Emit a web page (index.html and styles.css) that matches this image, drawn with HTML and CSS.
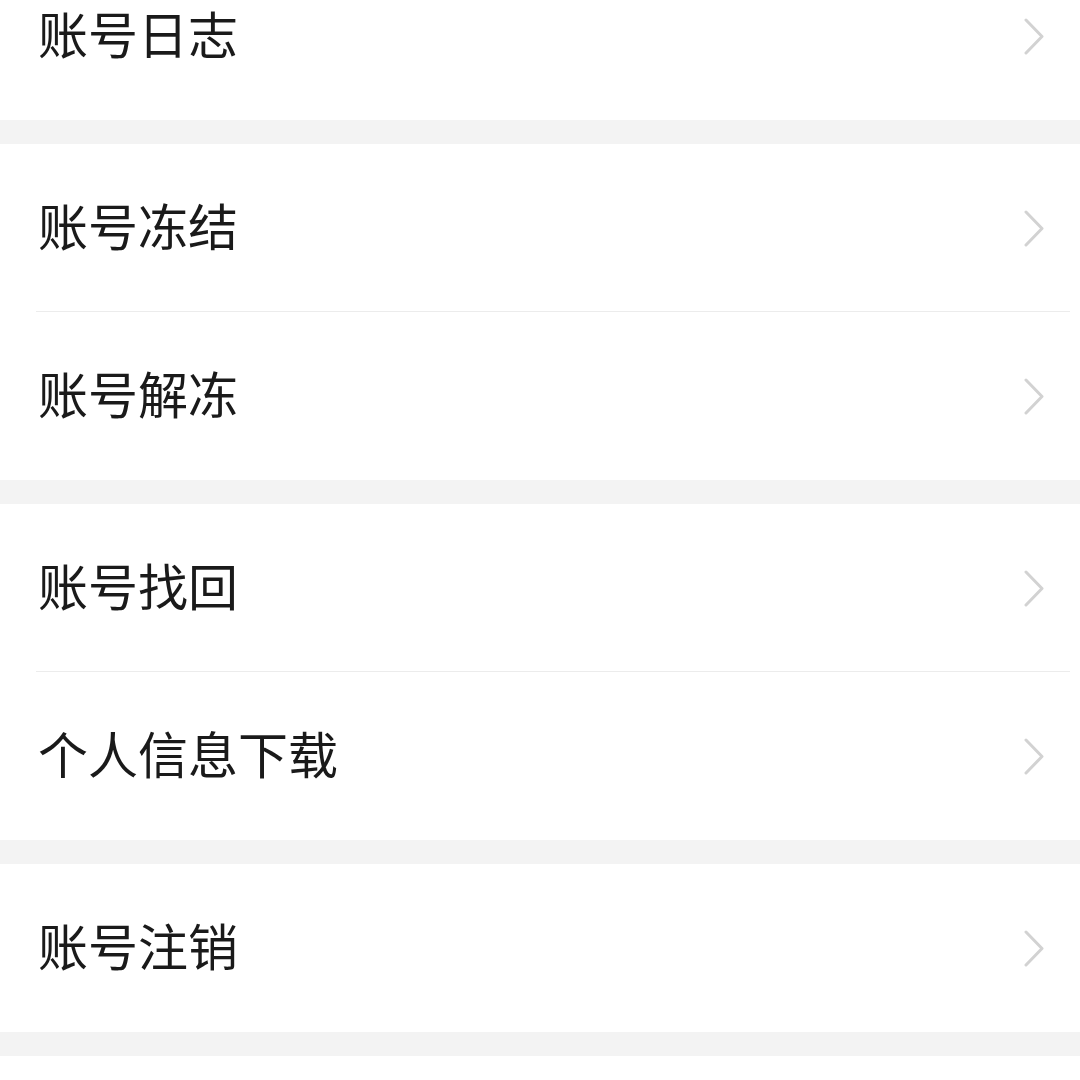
FILE: index.html
```html
<!DOCTYPE html>
<html lang="zh-CN">
<head>
    <meta charset="UTF-8">
    <meta name="viewport" content="width=device-width, initial-scale=1.0">
    <title>账号与安全</title>
    <link rel="stylesheet" href="styles.css">
</head>
<body>
<div class="settings">
    <div class="group group-first">
        <div class="item">
            <span class="label">账号日志</span>
            <svg class="arrow" viewBox="0 0 22 37"><polyline points="3,2 19,18.5 3,35"/></svg>
        </div>
    </div>
    <div class="group">
        <div class="item">
            <span class="label">账号冻结</span>
            <svg class="arrow" viewBox="0 0 22 37"><polyline points="3,2 19,18.5 3,35"/></svg>
        </div>
        <div class="item">
            <span class="label">账号解冻</span>
            <svg class="arrow" viewBox="0 0 22 37"><polyline points="3,2 19,18.5 3,35"/></svg>
        </div>
    </div>
    <div class="group">
        <div class="item">
            <span class="label">账号找回</span>
            <svg class="arrow" viewBox="0 0 22 37"><polyline points="3,2 19,18.5 3,35"/></svg>
        </div>
        <div class="item">
            <span class="label">个人信息下载</span>
            <svg class="arrow" viewBox="0 0 22 37"><polyline points="3,2 19,18.5 3,35"/></svg>
        </div>
    </div>
    <div class="group">
        <div class="item">
            <span class="label">账号注销</span>
            <svg class="arrow" viewBox="0 0 22 37"><polyline points="3,2 19,18.5 3,35"/></svg>
        </div>
    </div>
    <div class="group group-last"></div>
</div>
</body>
</html>
```

FILE: styles.css
```css
body {
    margin: 0;
    background-color: #f3f3f3;
    font-family: "Noto Sans CJK SC", "Noto Sans", sans-serif;
    overflow: hidden;
    height: 1080px;
}
.settings {
    display: flex;
    flex-direction: column;
    gap: 24px;
}
.group {
    background-color: #fff;
}
.group-first {
    margin-top: -48px;
}
.group-last {
    height: 24px;
}
.item {
    height: 168px;
    box-sizing: border-box;
    display: flex;
    align-items: center;
    justify-content: space-between;
    padding: 0 35px 0 38px;
    position: relative;
}
.item + .item::before {
    content: "";
    position: absolute;
    top: -1px;
    left: 36px;
    right: 10px;
    height: 1px;
    background-color: #ececec;
}
.label {
    font-size: 50px;
    color: #1a1a1a;
    line-height: 1;
    margin-bottom: 8px;
}
.arrow {
    width: 22px;
    height: 37px;
    fill: none;
    stroke: #d2d2d2;
    stroke-width: 3;
    stroke-linecap: round;
    stroke-linejoin: round;
}
```
